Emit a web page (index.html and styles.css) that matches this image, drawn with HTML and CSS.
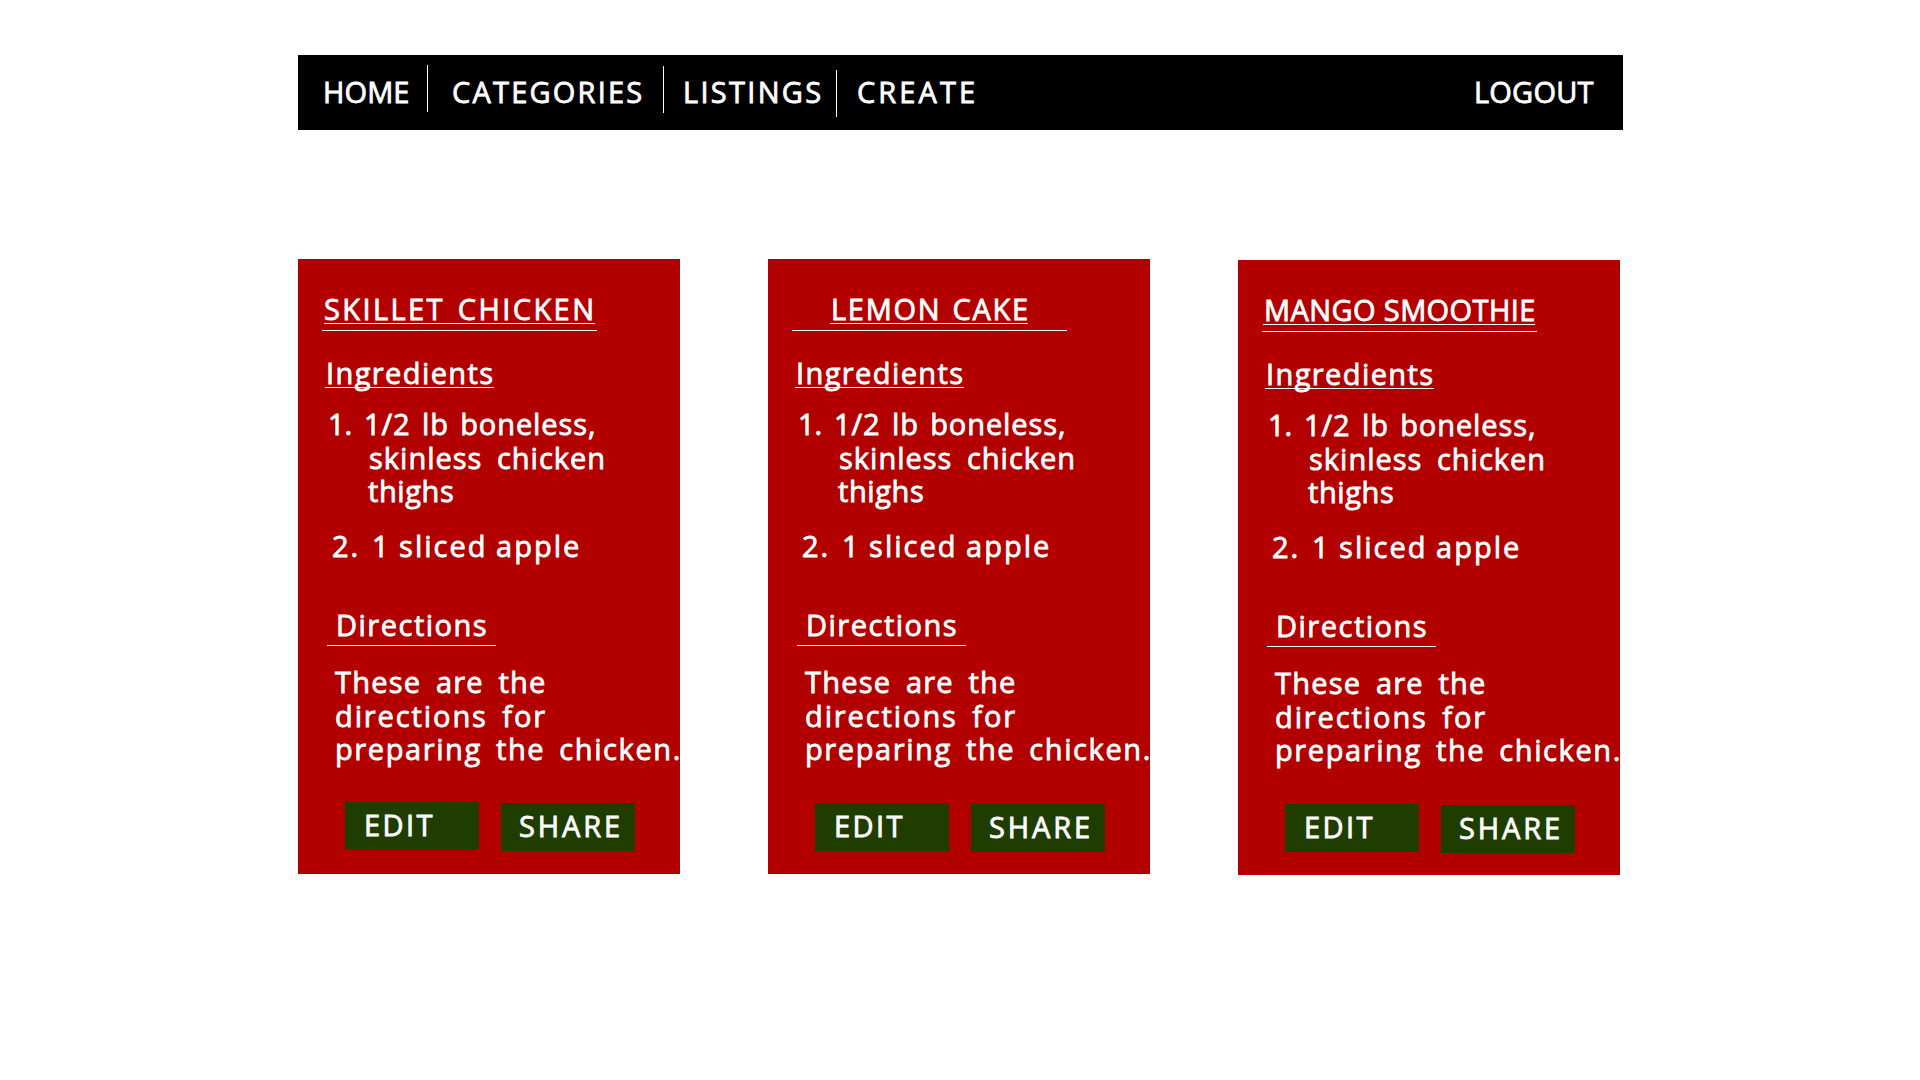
FILE: index.html
```html
<!DOCTYPE html>
<html lang="en">
<head>
<meta charset="utf-8">
<title>Recipes</title>
<link rel="stylesheet" href="styles.css">
</head>
<body>
<nav class="nav">
  <a class="link home">HOME</a>
  <span class="divider divider-1"></span>
  <a class="link categories">CATEGORIES</a>
  <span class="divider divider-2"></span>
  <a class="link listings">LISTINGS</a>
  <span class="divider divider-3"></span>
  <a class="link create">CREATE</a>
  <a class="link logout">LOGOUT</a>
</nav>
<main class="cards">
  <article class="card">
    <h2 class="title skillet"><span>SKILLET CHICKEN</span></h2>
    <h3 class="ingredients">Ingredients</h3>
    <div class="item"><span class="num">1.</span><div><div class="l1">1/2 lb boneless,</div><div class="l2">skinless chicken</div><div class="l3">thighs</div></div></div>
    <div class="item second"><span class="num">2.</span><div class="l4">1 sliced apple</div></div>
    <h3 class="directions">Directions</h3>
    <div class="steps"><div class="s1">These are the</div><div class="s2">directions for</div><div class="s3">preparing the chicken.</div></div>
    <div class="actions"><a class="button edit">EDIT</a><a class="button share">SHARE</a></div>
  </article>
  <article class="card middle">
    <h2 class="title lemon"><span>LEMON CAKE</span></h2>
    <h3 class="ingredients">Ingredients</h3>
    <div class="item"><span class="num">1.</span><div><div class="l1">1/2 lb boneless,</div><div class="l2">skinless chicken</div><div class="l3">thighs</div></div></div>
    <div class="item second"><span class="num">2.</span><div class="l4">1 sliced apple</div></div>
    <h3 class="directions">Directions</h3>
    <div class="steps"><div class="s1">These are the</div><div class="s2">directions for</div><div class="s3">preparing the chicken.</div></div>
    <div class="actions"><a class="button edit">EDIT</a><a class="button share">SHARE</a></div>
  </article>
  <article class="card last">
    <h2 class="title mango"><span>MANGO SMOOTHIE</span></h2>
    <h3 class="ingredients">Ingredients</h3>
    <div class="item"><span class="num">1.</span><div><div class="l1">1/2 lb boneless,</div><div class="l2">skinless chicken</div><div class="l3">thighs</div></div></div>
    <div class="item second"><span class="num">2.</span><div class="l4">1 sliced apple</div></div>
    <h3 class="directions">Directions</h3>
    <div class="steps"><div class="s1">These are the</div><div class="s2">directions for</div><div class="s3">preparing the chicken.</div></div>
    <div class="actions"><a class="button edit">EDIT</a><a class="button share">SHARE</a></div>
  </article>
</main>
</body>
</html>
```
FILE: styles.css
```css
* { box-sizing: border-box; margin: 0; padding: 0; }

body {
  padding: 55px 0 0 298px;
  background: #fff;
  color: #fff;
  font: 400 29px/34px "Open Sans", "Noto Sans", sans-serif;
  -webkit-text-stroke: 0.8px #fff;
  white-space: nowrap;
  overflow: hidden;
}

/* Navigation */
.nav { display: flex; width: 1325px; height: 75px; padding-left: 25px; background: #000; }
.link { line-height: 74px; }
.home { width: 104px; letter-spacing: 0.1px; }
.categories { width: 211px; margin-left: 24px; letter-spacing: 2.2px; }
.listings { width: 153px; margin-left: 19px; letter-spacing: 2.3px; }
.create { margin-left: 20px; letter-spacing: 3.1px; }
.logout { width: 149px; margin-left: auto; letter-spacing: 0.2px; }
.divider { width: 1px; height: 47px; background: #fff; }
.divider-1 { margin-top: 10px; }
.divider-2 { margin-top: 11px; }
.divider-3 { margin-top: 15px; }

/* Recipe cards */
.cards { display: flex; align-items: flex-start; gap: 88px; margin-top: 129px; }
.card { width: 382px; height: 615px; padding-top: 33px; background: #b20000; }
.last { margin-top: 1px; }

h2, h3 { font-size: inherit; font-weight: inherit; }
.title { width: 275px; height: 39px; margin-left: 24px; border-bottom: 1px solid #fff; }
.title span { display: block; height: 32px; border-bottom: 1px solid #fff; }
.skillet span { width: 271px; margin-left: 2px; letter-spacing: 2.4px; word-spacing: 3px; }
.lemon span { width: 198px; margin-left: 38px; padding-left: 1px; letter-spacing: 1.7px; word-spacing: 2px; }
.mango span { width: 272px; margin-left: 1px; padding-left: 1px; letter-spacing: 0.4px; }

.ingredients {
  width: 169px;
  height: 32px;
  margin: 25px 0 19px 27px;
  padding-left: 1px;
  border-bottom: 1px solid #fff;
  letter-spacing: 1.4px;
}
.item { display: flex; margin-left: 30px; line-height: 33.5px; }
.num { width: 36px; }
.l1 { letter-spacing: 0.9px; word-spacing: 3px; }
.l2 { margin-left: 5px; letter-spacing: 1px; word-spacing: 6px; }
.l3 { margin-left: 4px; letter-spacing: 0.6px; }
.second { margin: 21.5px 0 0 34px; line-height: 34px; }
.second .num { width: 40px; letter-spacing: 2px; }
.l4 { letter-spacing: 2px; word-spacing: -1px; }

.directions {
  width: 169px;
  height: 38px;
  margin: 45px 0 19px 29px;
  padding-left: 9px;
  border-bottom: 1px solid #fff;
  letter-spacing: 1.5px;
}
.steps { margin-left: 37px; line-height: 33.5px; }
.s1 { letter-spacing: 1.2px; word-spacing: 6px; }
.s2 { letter-spacing: 1.9px; word-spacing: 5px; }
.s3 { letter-spacing: 1.6px; word-spacing: 5px; }

.actions { display: flex; gap: 22px; margin: 36.5px 0 0 47px; }
.middle .actions { padding-top: 1px; }
.last .actions { padding-top: 1px; }
.button { width: 134px; height: 48px; background: #203d00; line-height: 46px; }
.edit { padding-left: 19px; letter-spacing: 2.4px; }
.share { margin-top: 1px; padding-left: 18px; letter-spacing: 2.9px; }
```
